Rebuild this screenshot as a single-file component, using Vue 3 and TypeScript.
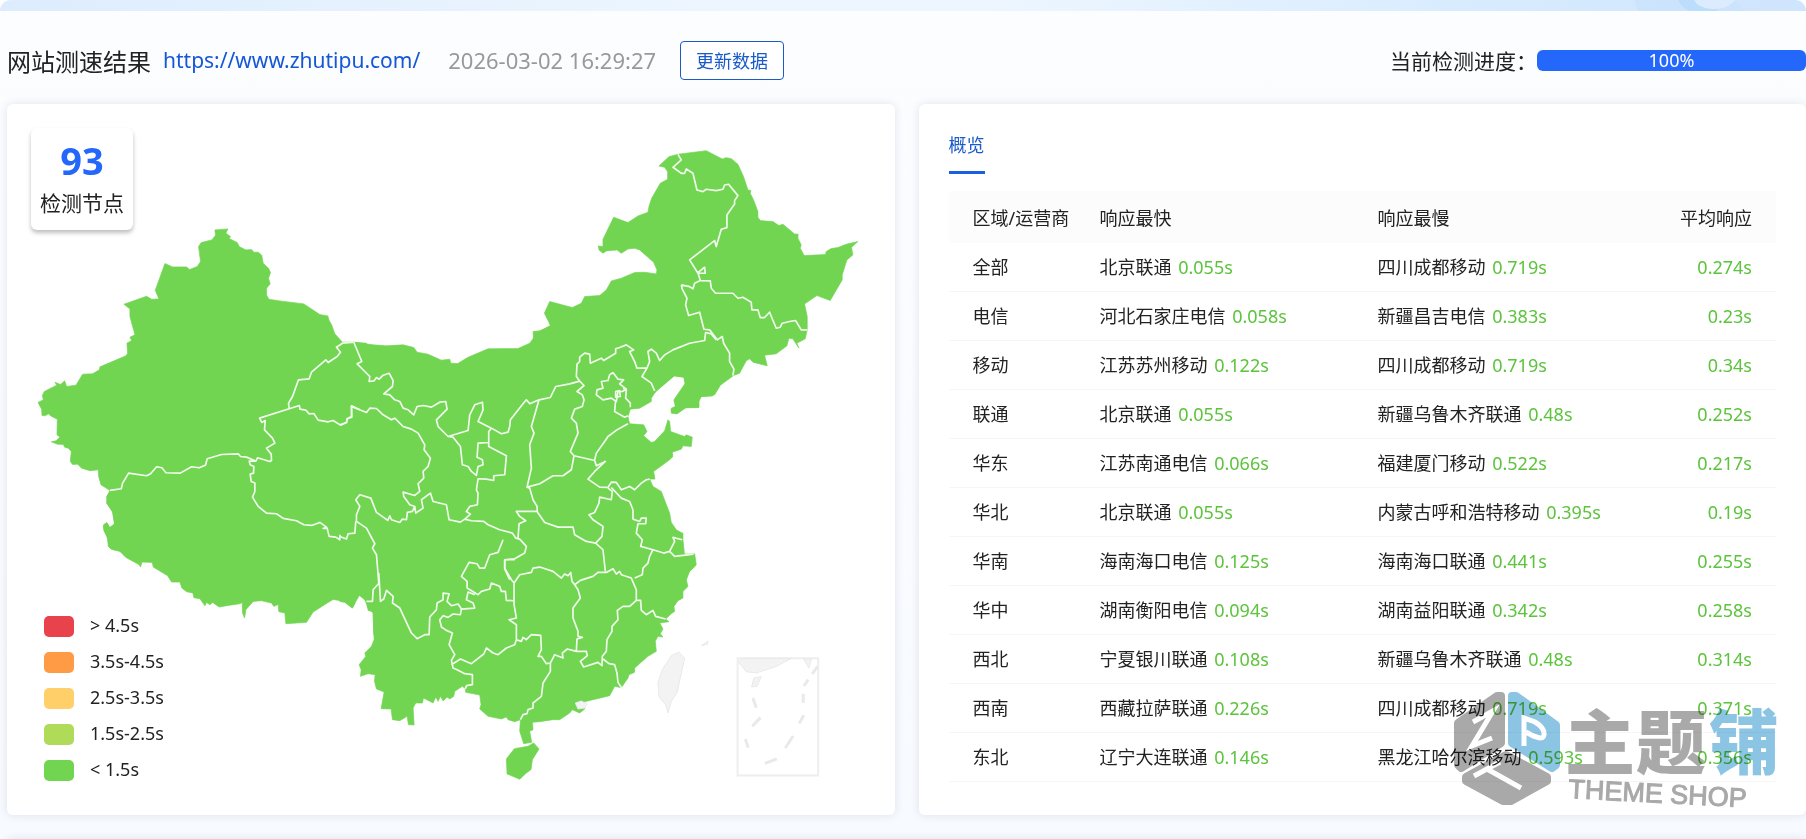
<script setup lang="ts">
interface Reading {
  node: string
  time: string
}

interface Row {
  area: string
  fastest: Reading
  slowest: Reading
  average: string
}

interface MapPart {
  name: string
  x: number
  y: number
  land: string
  borders: string
}

const row = (
  area: string,
  fastNode: string,
  fastTime: string,
  slowNode: string,
  slowTime: string,
  average: string,
): Row => ({
  area,
  fastest: { node: fastNode, time: fastTime },
  slowest: { node: slowNode, time: slowTime },
  average,
})

const rows: Row[] = [
  row('全部', '北京联通', '0.055s', '四川成都移动', '0.719s', '0.274s'),
  row('电信', '河北石家庄电信', '0.058s', '新疆昌吉电信', '0.383s', '0.23s'),
  row('移动', '江苏苏州移动', '0.122s', '四川成都移动', '0.719s', '0.34s'),
  row('联通', '北京联通', '0.055s', '新疆乌鲁木齐联通', '0.48s', '0.252s'),
  row('华东', '江苏南通电信', '0.066s', '福建厦门移动', '0.522s', '0.217s'),
  row('华北', '北京联通', '0.055s', '内蒙古呼和浩特移动', '0.395s', '0.19s'),
  row('华南', '海南海口电信', '0.125s', '海南海口联通', '0.441s', '0.255s'),
  row('华中', '湖南衡阳电信', '0.094s', '湖南益阳联通', '0.342s', '0.258s'),
  row('西北', '宁夏银川联通', '0.108s', '新疆乌鲁木齐联通', '0.48s', '0.314s'),
  row('西南', '西藏拉萨联通', '0.226s', '四川成都移动', '0.719s', '0.371s'),
  row('东北', '辽宁大连联通', '0.146s', '黑龙江哈尔滨移动', '0.593s', '0.356s'),
]

const legend = [
  { label: '> 4.5s', tone: 'red' },
  { label: '3.5s-4.5s', tone: 'orange' },
  { label: '2.5s-3.5s', tone: 'yellow' },
  { label: '1.5s-2.5s', tone: 'lime' },
  { label: '< 1.5s', tone: 'green' },
]

// Overlapping land pieces; together they form one seamless silhouette.
const mapParts: MapPart[] = [
  {
    name: 'northwest',
    x: 0,
    y: 630,
    land: 'M645,60 684,57 678,70 692,80 688,86 712,98 718,110 738,120 755,119 762,127 776,127 786,137 790,160 806,175 812,188 806,205 811,222 800,235 800,255 807,268 840,273 912,282 960,314 984,318 988,332 995,344 1005,372 1028,397 1062,397 1100,400 1100,1000 330,1000 311,960 311,945 320,938 329,953 344,943 338,905 320,880 322,860 330,842 303,825 296,800 295,780 270,783 245,775 233,763 218,764 211,755 214,725 205,715 194,712 190,704 172,703 154,696 168,693 180,682 171,675 172,628 155,620 145,612 136,618 126,617 125,598 114,578 130,570 127,557 133,545 170,526 165,517 182,524 194,513 200,530 228,526 248,493 278,492 298,480 300,471 378,438 383,430 381,400 395,392 390,382 405,375 390,320 390,297 372,283 440,259 455,268 477,267 466,241 495,161 518,171 560,171 569,179 592,170 602,155 596,110 604,98 636,90 647,76Z',
    borders: 'M330,842 364,837 368,820 386,790 440,798 452,792 470,771 486,774 498,789 541,790 575,771 598,774 617,766 622,747 665,734 715,732 722,740 740,742 768,754 773,744 810,755 815,752 814,733 800,715 825,700 818,685 794,660 796,632 786,638 779,625 868,597 899,587 900,598 918,601 928,612 942,611 955,631 985,636 1000,632 1022,646 1040,638 1042,627 1056,622 1055,588 1080,600M768,754 748,754 751,765 762,770 761,790 751,793 754,815 765,820 765,845 758,862 775,890 800,910 830,912 850,926 890,933 912,945 935,947 960,938 980,952 970,956 982,955 988,980 1008,982 1020,990 1020,975M868,597 866,580 878,560 896,510 928,507 935,487 978,450 985,458 1012,440 1022,427 1010,412 1028,400 1062,397',
  },
  {
    name: 'southwest',
    x: 60,
    y: 1350,
    land: 'M273,120 260,140 262,162 278,187 284,222 269,235 262,220 251,228 254,245 262,262 265,290 275,299 300,305 318,323 358,345 362,352 366,337 397,338 400,352 443,378 455,397 480,397 486,415 500,426 519,430 522,444 540,447 555,468 560,458 570,465 578,458 598,472 625,467 660,462 667,458 668,490 674,505 678,480 700,455 725,453 755,460 762,470 775,464 777,486 795,490 798,522 860,518 880,487 925,458 940,449 975,455 997,475 1005,462 1005,450 1017,436 1035,450 1045,475 1060,490 1062,555 1140,600 1140,100Z',
    borders: '',
  },
  {
    name: 'central',
    x: 1020,
    y: 960,
    land: 'M-20,72 40,67 100,75 140,78 190,75 222,83 232,97 265,103 305,121 330,118 333,130 354,131 385,112 445,87 535,86 570,70 592,40 632,17 628,0 1160,0 1140,200 1125,225 1117,228 1085,230 1078,245 1078,263 1035,264 1012,282 995,275 995,265 1007,260 1003,240 1037,190 1033,172 1003,168 950,213 935,235 935,245 900,265 872,268 865,290 870,312 912,315 922,335 912,348 935,368 945,365 975,333 985,300 990,305 993,335 1020,345 1035,350 1040,345 1058,352 1055,380 1030,378 1025,388 998,397 1000,410 990,420 942,455 946,478 930,478 940,500 965,515 990,580 995,608 1010,630 1027,640 1030,703 1062,703 1068,738 1050,755 1040,780 -20,800Z',
    borders: 'M42,67 66,125 52,132 90,170 88,185 103,183 110,173 118,178 130,166 148,160 160,182 158,200 132,222 150,225 165,240 180,245 190,265 205,270 222,285 232,260 250,257 275,262 300,247 318,245 322,268 290,300 295,320 325,350 385,332 390,285 405,255 428,247 430,270 415,305 455,325 485,342 505,337 510,320 512,300 550,252 560,240 570,252 598,240 632,233 648,200 690,192 720,184M0,315 20,308 22,297 35,290 35,260 80,278 90,265 110,266 130,285 155,300 165,295 190,320 215,328 235,340 255,375 253,390 272,415 265,440 250,455 252,475 235,492 240,515 225,527 190,517 192,530 210,555 225,560 228,580 250,565 245,540 272,520 280,545 320,555 328,600 362,607 375,598 395,603 432,605 445,615 480,630 518,640 528,655 540,658 560,680 555,700 525,717 495,720 495,748 510,780M225,560 218,575 203,578 200,600 188,598 180,608 155,600 150,588 144,602 110,578 93,535 60,525 48,540 60,560 50,585 50,605 80,625 105,672 98,685 110,705 117,790M48,605 45,640 25,642 20,658 0,650M375,598 392,583 380,575 390,560 413,555 415,520 410,510 415,477 440,478 462,482 462,468 495,465 500,408 447,380 447,335 455,325M325,350 340,352 362,380 368,435 385,440 395,455 410,467 415,440 430,435 428,420 412,412 415,370 447,368M598,240 575,320 583,340 570,375 575,445 562,502 570,505 580,540 592,560 593,577 615,608 655,622 700,622 705,645 740,665 768,670M562,502 600,492 640,468 670,468 695,450 703,408 692,395 715,340 710,310 695,295 705,268 728,260 733,240 728,225 712,215 733,197 720,184 710,170 712,133 720,125 720,112 735,100 750,103 752,130 785,115 792,122 828,100 828,87 840,83 860,75 882,90 870,95 885,125 892,145 922,145 930,125 925,95 935,88 950,100 960,122 975,105 1000,90 1050,70 1095,62 1098,38 1115,42 1130,60M703,408 765,422 770,438 797,425 765,455 745,478 780,502 805,503 815,487 830,488 845,510 870,500 885,510 905,490 920,480 930,478M765,420 770,400 795,365 805,350 835,328 865,312M922,145 907,170 935,190 945,213M820,158 835,178 852,180 840,192 860,208 848,215 835,215 830,245 815,235 790,240 770,225 772,210 790,205 785,185 805,182 810,165 820,158M850,205 860,210 858,235 872,250 872,262M828,215 840,212 842,230 828,232ZM828,240 825,275 855,292 865,288M535,655 538,612 558,603 540,590 530,575 593,575M805,505 818,515 815,540 780,532 778,550 765,578 748,585 760,600 790,620 787,650 768,670 790,690 797,755M815,503 845,535 870,545 880,570 880,598 900,605 905,595 920,595 918,612 895,612 890,640 908,660 903,680 940,690 930,710 925,730 910,745 908,765 885,775M940,690 972,700 990,695 1005,710 1062,703M990,695 1005,665 1000,653 1028,660',
  },
  {
    name: 'south',
    x: 1020,
    y: 1620,
    land: 'M0,-20 0,185 15,188 38,205 48,185 60,165 80,185 85,212 100,216 103,300 95,320 75,340 78,350 58,375 64,390 62,410 85,402 106,405 104,425 110,448 133,457 124,507 154,508 158,540 180,543 202,530 206,555 223,556 220,505 228,490 248,490 251,475 280,490 288,472 295,485 302,470 310,484 322,472 330,478 342,470 345,455 368,440 377,447 378,458 420,466 424,495 420,508 445,530 485,538 500,532 505,540 525,546 542,540 540,575 552,612 576,608 570,575 580,570 578,548 600,546 640,540 660,540 690,520 698,510 720,520 735,508 728,488 760,480 810,468 825,440 845,444 865,415 868,405 885,398 885,385 925,350 950,335 947,305 955,290 970,292 962,282 970,268 965,258 960,250 988,246 978,238 995,222 1005,215 1003,200 1015,183 1030,175 1030,155 1045,140 1040,120 1045,100 1060,85 1060,75 1070,75 1065,42 1035,48 1030,0 1030,-20ZM582,610 598,628 578,660 574,690 560,700 540,719 502,703 500,658 524,627 565,620Z',
    borders: 'M117,100 122,185 132,178 140,152 160,170 158,190 180,205 215,280 232,297 255,285 268,285 270,232 290,210 292,190 310,180 310,160 328,162 322,185 335,198 355,193 365,208 362,225 340,223 325,233 310,228 300,240 305,262 320,272 338,280 328,315 345,345 335,362 340,385 352,390 375,402 398,405 398,435 380,438 377,447M365,208 405,205 400,190 380,180 385,157 405,165M80,185 98,185 100,150 118,130M490,0 475,38 450,45 435,85 420,85 412,72 388,68 365,110 382,125 382,145 415,165 425,155 450,148 455,130 480,140 485,155 497,155 500,182 522,183M525,60 495,60 495,85 515,120 523,130 540,105 575,98 580,85 600,82 640,95 665,115 675,103 685,108 693,98 697,125 705,135 722,122 760,110 775,98 800,98 820,87 830,103 840,95 845,105 875,115 890,150 890,182 903,182 905,212 920,225 940,212 948,230 978,238M523,130 523,195 530,235 508,240 530,255 530,300 525,315 500,325 475,345 460,340 440,325 432,343 395,372 362,358 335,375M530,300 545,305 550,293 560,300 575,285 603,287 605,330 595,350 605,350 620,372 632,370 645,345 670,355 668,340 683,328 710,335 740,335 743,348 722,365 732,382 775,368 787,378 788,350 800,335 802,300 817,275 817,260 835,240 833,212 850,200 870,200 890,182M632,370 632,395 610,430 605,470 580,490 580,505 565,510 562,522 550,525 542,540M705,135 715,150 722,175 700,205 700,235 715,275 715,290 728,293 712,298 710,335M790,358 808,372 825,375 832,400 835,428 848,448',
  },
  {
    name: 'northeast',
    x: 1620,
    y: 390,
    land: 'M358,108 388,80 415,73 500,62 548,87 560,83 575,86 595,103 612,140 625,180 634,182 632,190 642,210 655,245 655,262 662,272 700,275 718,287 730,283 765,312 776,313 775,325 785,345 782,355 794,377 858,374 860,365 875,356 895,353 920,343 955,335 936,352 940,375 922,390 908,435 908,450 872,512 832,497 795,522 803,560 803,600 797,627 772,640 778,655 760,627 748,625 742,648 710,672 675,676 683,708 640,697 630,687 620,693 600,730 582,737 540,768 518,798 485,800 477,810 477,832 440,833 412,852 395,850 395,838 410,832 404,812 437,765 433,742 404,738 345,788 0,900 -20,605 0,603 33,588 14,550 30,515 98,533 125,520 135,500 180,497 200,480 215,453 245,445 285,428 315,427 350,432 352,420 342,397 300,360 285,355 265,357 245,370 232,360 200,363 190,370 178,360 176,348 190,350 190,328 222,262 265,278 295,258 325,247 328,230 336,205 362,160 384,148 384,125 375,112Z',
    borders: 'M415,73 425,90 400,112 425,130 435,130 440,117 460,130 472,180 490,185 500,178 530,182 550,178 555,165 567,163 595,197 585,212 585,222 562,255 562,293 545,298 530,350 525,332 450,390 475,430 497,430 495,412 475,428 482,452M425,465 450,470 460,477 465,460 482,452 512,453 515,475 528,490 580,490 595,505 610,502 635,517 637,540 655,540 662,563 675,563 690,547 710,595 722,592 728,580 750,575 768,572 785,600 803,600M425,465 428,478 442,505 438,525 447,557 480,547 493,598 510,600 533,630 548,620 552,640 570,670 570,695 583,718 580,737',
  },
]
</script>

<template>
  <main class="page">
    <div class="banner" aria-hidden="true">
      <svg viewBox="0 0 200 11" preserveAspectRatio="xMaxYMin slice">
        <path d="M28 0H130L138 11H32Z" fill="#c8e1fd" opacity=".6" />
        <path d="M72 0Q76 8 84 11H110Q116 3 130 0Z" fill="#b5dafb" opacity=".7" />
        <path d="M88 0Q92 8 106 9T130 0Z" fill="#dcecfe" />
      </svg>
    </div>

    <header class="heading">
      <h1>网站测速结果</h1>
      <a class="site" href="https://www.zhutipu.com/">https://www.zhutipu.com/</a>
      <time datetime="2026-03-02T16:29:27">2026-03-02 16:29:27</time>
      <button class="refresh" type="button">更新数据</button>
      <div class="status">
        <span id="progress-label">当前检测进度：</span>
        <div
          class="progress"
          role="progressbar"
          aria-labelledby="progress-label"
          aria-valuenow="100"
          aria-valuemin="0"
          aria-valuemax="100"
        >
          100%
        </div>
      </div>
    </header>

    <div class="panels">
      <section class="card map-card" aria-label="检测节点">
        <svg class="map" viewBox="21 312 2664 2133" aria-hidden="true">
          <g v-for="part in mapParts" :key="part.name" :transform="`translate(${part.x} ${part.y})`">
            <path class="land" :d="part.land" />
          </g>
          <g v-for="part in mapParts" :key="part.name" :transform="`translate(${part.x} ${part.y})`">
            <path class="border" :d="part.borders" />
          </g>
          <g class="pale" transform="translate(1020 1620)">
            <path d="M707 490 725 484 742 493 735 505 715 508Z" />
            <path d="M1017 337 1035 355 1012 460 995 485 985 520 978 495 958 472 955 430 968 390 995 348Z" />
            <path d="M1085 318 1105 304 1104 314Z" />
          </g>
          <g class="pale" transform="translate(1920 1860)">
            <path class="frame" d="M294 116H536V468H294Z" />
            <path d="M296 126 312 116H456L410 140 350 160 320 156Z" />
            <path d="M343 175 365 171 352 200 336 202ZM492 118H516L508 145Z" />
            <path class="dash" d="M340 235 350 264M363 294 338 320M317 358 326 384M376 431 412 418M461 349 437 385M493 287 479 311M491 222V249M506 180 493 199M534 140 518 163" />
          </g>
        </svg>

        <div class="counter">
          <strong>93</strong>
          <span>检测节点</span>
        </div>

        <ul class="legend">
          <li v-for="item in legend" :key="item.tone">
            <i :class="item.tone"></i>
            <span>{{ item.label }}</span>
          </li>
        </ul>
      </section>

      <section class="card table-card">
        <div class="tabs" role="tablist">
          <button type="button" role="tab" aria-selected="true">概览</button>
        </div>
        <table>
          <colgroup>
            <col class="col-area" />
            <col class="col-fast" />
            <col />
            <col class="col-average" />
          </colgroup>
          <thead>
            <tr>
              <th scope="col">区域/运营商</th>
              <th scope="col">响应最快</th>
              <th scope="col">响应最慢</th>
              <th scope="col">平均响应</th>
            </tr>
          </thead>
          <tbody>
            <tr v-for="item in rows" :key="item.area">
              <td>{{ item.area }}</td>
              <td>{{ item.fastest.node }} <span class="time">{{ item.fastest.time }}</span></td>
              <td>{{ item.slowest.node }} <span class="time">{{ item.slowest.time }}</span></td>
              <td><span class="time">{{ item.average }}</span></td>
            </tr>
          </tbody>
        </table>

        <svg class="watermark" viewBox="0 0 340 130" role="img" aria-label="主题铺 THEME SHOP">
          <g stroke-width="8" stroke-linejoin="round">
            <path d="M48 11 48 58 8 83 5 80V38L44 11Z" fill="#a9a9a9" stroke="#a9a9a9" />
            <path d="M59 11 59 58 99 83 103 80V40L63 11Z" fill="#8cc4e4" stroke="#8cc4e4" />
            <path d="M53 70 94 92V96L58 116H50L13 96V92Z" fill="#a9a9a9" stroke="#a9a9a9" />
          </g>
          <g class="mark-lines">
            <path d="M20 37 40 26 19 61 39 53" />
            <path d="M71 61V33L82 37Q92 43 91 50T73 47" />
            <path d="M21 91 47 77M34 84 68 103" />
          </g>
          <text class="mark-name" x="112" y="84">主<tspan x="183">题</tspan><tspan class="mark-blue" x="256">铺</tspan></text>
          <text class="mark-sub" transform="translate(115 113) rotate(3)">THEME SHOP</text>
        </svg>
      </section>
    </div>

    <section class="card next" aria-hidden="true"></section>
  </main>
</template>

<style>
body {
  margin: 0;
}
</style>

<style scoped>
.page {
  min-height: 100vh;
  box-sizing: border-box;
  overflow: hidden;
  background: linear-gradient(#fcfdff, #f7faff);
  color: #222;
  font-family: "Noto Sans", "Noto Sans CJK SC", sans-serif;
  font-size: 18px;
}

.banner {
  height: 11px;
  border-radius: 12px 12px 0 0;
  overflow: hidden;
  background: linear-gradient(90deg, #ddecfd, #edf6ff 40%, #edf6ff 55%, #d9ecfe 80%, #cfe4fd);
}

.banner svg {
  display: block;
  width: 200px;
  height: 11px;
  margin-left: auto;
}

.heading {
  display: flex;
  align-items: center;
  height: 93px;
  padding: 5px 0 0 7px;
  box-sizing: border-box;
}

h1 {
  margin: 0 12px 0 0;
  font-size: 24px;
  font-weight: 400;
}

.site {
  margin-right: 28px;
  color: #1557d6;
  font-size: 21px;
  text-decoration: none;
}

time {
  margin-right: 24px;
  color: #999;
  font-size: 22px;
}

.refresh {
  height: 39px;
  padding: 0 15px;
  border: 1px solid #1a5bc8;
  border-radius: 4px;
  background: #fff;
  color: #1a5bc8;
  font: inherit;
}

.status {
  display: flex;
  align-items: center;
  margin-left: auto;
  font-size: 21px;
}

.progress {
  width: 269px;
  height: 21px;
  border-radius: 6px;
  background: #2468fb;
  color: #fff;
  font-size: 18px;
  line-height: 21px;
  text-align: center;
}

.panels {
  display: grid;
  grid-template-columns: 1fr 1fr;
  gap: 24px;
  padding-left: 7px;
}

.card {
  position: relative;
  border-radius: 6px;
  background: #fff;
  box-shadow: 0 0 10px rgba(40, 50, 90, 0.12);
}

.map {
  display: block;
  width: 100%;
}

.land {
  fill: #71d552;
  stroke: #71d552;
  stroke-width: 2;
}

.border {
  fill: none;
  stroke: #f1fbed;
  stroke-width: 5;
  stroke-linejoin: round;
}

.pale path {
  fill: #f3f3f3;
  stroke: #e9e9e9;
  stroke-width: 3;
}

.pale .frame {
  fill: #fff;
  stroke: #eee;
  stroke-width: 6;
}

.pale .dash {
  fill: none;
  stroke-width: 9;
}

.counter {
  position: absolute;
  top: 24px;
  left: 24px;
  display: flex;
  flex-direction: column;
  align-items: center;
  width: 102px;
  height: 102px;
  border-radius: 6px;
  background: #fff;
  box-shadow: 0 3px 4px rgba(0, 0, 0, 0.25);
}

.counter strong {
  margin-top: 8px;
  color: #2468fb;
  font-size: 38px;
  line-height: 48px;
}

.counter span {
  font-size: 21px;
  line-height: 38px;
}

.legend {
  position: absolute;
  bottom: 26px;
  left: 37px;
  margin: 0;
  padding: 0;
  list-style: none;
}

.legend li {
  display: flex;
  align-items: center;
  gap: 16px;
  height: 36px;
}

.legend i {
  width: 30px;
  height: 21px;
  border-radius: 5px;
}

.legend span {
  padding-bottom: 4px;
}

.red {
  background: #e8424c;
}

.orange {
  background: #ff9a45;
}

.yellow {
  background: #ffcf69;
}

.lime {
  background: #b0db59;
}

.green {
  background: #71d552;
}

.table-card {
  padding: 18px 30px 0;
}

.tabs button {
  display: block;
  height: 52px;
  padding: 0 0 6px;
  border: 0;
  border-bottom: 3px solid #1a5fe0;
  background: none;
  color: #1a5bc8;
  font: inherit;
}

table {
  width: 100%;
  margin-top: 17px;
  border-collapse: separate;
  border-spacing: 0;
  table-layout: fixed;
}

.col-area {
  width: 127px;
}

.col-fast {
  width: 278px;
}

.col-average {
  width: 128px;
}

th,
td {
  padding: 11px 0 11px 24px;
  border-bottom: 1px solid #f6f6f6;
  font-weight: 400;
  line-height: 26px;
  text-align: left;
  white-space: nowrap;
}

th {
  padding: 14px 0 11px 24px;
  border-color: #fcfcfc;
  background: #fcfcfc;
}

th:last-child,
td:last-child {
  padding-right: 24px;
  padding-left: 0;
  text-align: right;
}

.time {
  margin-left: 2px;
  color: #5cc43c;
}

.watermark {
  position: absolute;
  right: 13px;
  bottom: 0;
  width: 340px;
  height: 130px;
  overflow: visible;
  mix-blend-mode: multiply;
  pointer-events: none;
}

.mark-lines {
  fill: none;
  stroke: #fff;
  stroke-width: 5;
}

.mark-name {
  fill: #a9a9a9;
  font-family: "Noto Sans CJK SC", sans-serif;
  font-size: 70px;
  font-weight: 900;
}

.mark-blue {
  fill: #8cc4e4;
}

.mark-sub {
  fill: #a9a9a9;
  stroke: #a9a9a9;
  stroke-width: 1;
  font-family: "Liberation Sans", sans-serif;
  font-size: 27px;
}

.next {
  height: 24px;
  margin: 24px 0 -24px 7px;
}
</style>
